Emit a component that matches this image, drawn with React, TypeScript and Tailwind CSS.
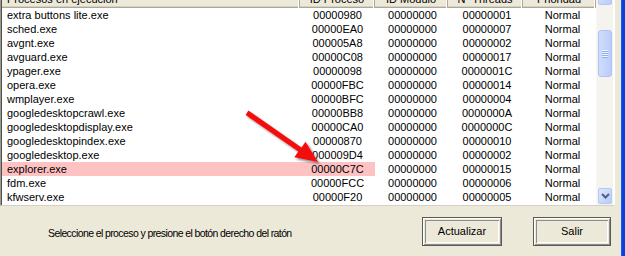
import React from "react";

const rows: [string, string, string, string][] = [
  ["extra buttons lite.exe", "00000980", "00000000", "00000001"],
  ["sched.exe", "00000EA0", "00000000", "00000007"],
  ["avgnt.exe", "000005A8", "00000000", "00000002"],
  ["avguard.exe", "00000C08", "00000000", "00000017"],
  ["ypager.exe", "00000098", "00000000", "0000001C"],
  ["opera.exe", "00000FBC", "00000000", "00000014"],
  ["wmplayer.exe", "00000BFC", "00000000", "00000004"],
  ["googledesktopcrawl.exe", "00000BB8", "00000000", "0000000A"],
  ["googledesktopdisplay.exe", "00000CA0", "00000000", "0000000C"],
  ["googledesktopindex.exe", "00000870", "00000000", "00000010"],
  ["googledesktop.exe", "000009D4", "00000000", "00000002"],
  ["explorer.exe", "00000C7C", "00000000", "00000015"],
  ["fdm.exe", "00000FCC", "00000000", "00000006"],
  ["kfwserv.exe", "00000F20", "00000000", "00000005"],
];

function HeaderCell({ w, label, left }: { w: string; label: string; left?: boolean }) {
  return (
    <div
      className={`${w} h-full flex items-center border-r border-r-[#ACA899] shadow-[inset_-1px_0_0_#ffffff,inset_0_-1px_0_#ACA899,inset_0_-2px_0_#D6D2C2] ${
        left ? "justify-start pl-[5px]" : "justify-center"
      }`}
    >
      <span className="mt-[1px]">{label}</span>
    </div>
  );
}

function Btn({ label, w }: { label: string; w: string }) {
  return (
    <div
      className={`${w} h-[29px] flex items-center justify-center border border-[#5A5A5A] bg-[#ECE9D8] shadow-[inset_1px_1px_0_#ffffff,inset_-1px_-1px_0_#8C8C8C,inset_2px_2px_0_#ECE9D8,inset_-2px_-2px_0_#ECE9D8,inset_3px_3px_0_#8C8C8C,inset_-3px_-3px_0_#ffffff]`}
    >
      {label}
    </div>
  );
}

export default function App() {
  return (
    <div
      className="w-[625px] h-[256px] flex bg-[#ECE9D8] overflow-hidden relative text-black text-[11px] leading-none"
      style={{ fontFamily: '"Liberation Sans", Arial, sans-serif' }}
    >
      <div className="w-[621px] flex flex-col">
        {/* List box */}
        <div className="w-[615px] h-[206px] flex border-l border-l-[#9C9A8E] border-b border-b-[#D4D0C8] border-r border-r-[#ffffff] bg-white">
          <div className="w-[1px] bg-[#505050]" />
          <div className="w-[594px] flex flex-col overflow-hidden">
            <div className="-mt-[10px] h-[18px] flex bg-[#ECE9D8] shrink-0">
              <HeaderCell w="w-[298px]" label="Procesos en ejecución" left />
              <HeaderCell w="w-[75px]" label="ID Proceso" />
              <HeaderCell w="w-[73px]" label="ID Módulo" />
              <HeaderCell w="w-[75px]" label="Nº Threads" />
              <HeaderCell w="w-[73px]" label="Prioridad" />
            </div>
            <div className="flex flex-col">
              {rows.map((r) => {
                const hl = r[0] === "explorer.exe";
                return (
                  <div key={r[0]} className="h-[14px] flex items-center">
                    <div className={`w-[298px] h-full flex items-center pl-[5px] ${hl ? "bg-[#FFC2C2]" : ""}`}>
                      {r[0]}
                    </div>
                    <div className={`w-[75px] h-full flex items-center justify-center ${hl ? "bg-[#FFC2C2]" : ""}`}>
                      {r[1]}
                    </div>
                    <div className="w-[73px] h-full flex items-center justify-center pl-[2px]">{r[2]}</div>
                    <div className="w-[75px] h-full flex items-center justify-center pl-[3px]">{r[3]}</div>
                    <div className="w-[73px] h-full flex items-center justify-center pl-[6px]">Normal</div>
                  </div>
                );
              })}
            </div>
          </div>
          {/* Scrollbar */}
          <div className="w-[17px] flex flex-col bg-[#F4F3EE] border-l border-l-[#F8F7F2]">
            <div className="-mt-[11px] h-[16px] mx-[1px] rounded-[2px] border border-[#B4C8F6] bg-gradient-to-br from-[#DCE6FE] to-[#B9CCF9] flex items-center justify-center shrink-0">
              <svg width="9" height="6" viewBox="0 0 9 6">
                <path d="M1 5 L4.5 1.5 L8 5" stroke="#4D6185" strokeWidth="2" fill="none" />
              </svg>
            </div>
            <div className="flex-1 flex flex-col">
              <div className="mt-[25px] h-[47px] mx-[1px] rounded-[3px] border border-[#AEC3F4] bg-gradient-to-r from-[#CFDCFD] to-[#BACDF9] flex flex-col items-center justify-center gap-[1px]">
                <div className="w-[6px] h-[1px] bg-[#EEF4FE] shadow-[0_1px_0_#8CB0F8]" />
                <div className="w-[6px] h-[1px] bg-[#EEF4FE] shadow-[0_1px_0_#8CB0F8]" />
                <div className="w-[6px] h-[1px] bg-[#EEF4FE] shadow-[0_1px_0_#8CB0F8]" />
                <div className="w-[6px] h-[1px] bg-[#EEF4FE] shadow-[0_1px_0_#8CB0F8]" />
              </div>
            </div>
            <div className="h-[16px] mx-[1px] mb-[1px] rounded-[2px] border border-[#B4C8F6] bg-gradient-to-br from-[#DCE6FE] to-[#B9CCF9] flex items-center justify-center shrink-0">
              <svg width="9" height="6" viewBox="0 0 9 6">
                <path d="M1 1 L4.5 4.5 L8 1" stroke="#4D6185" strokeWidth="2" fill="none" />
              </svg>
            </div>
          </div>
        </div>
        {/* Bottom area */}
        <div className="flex items-start pt-[11px]">
          <div className="w-[422px] h-[29px] flex items-center pl-[48px] pt-[3px] text-[10.5px] tracking-[-0.6px]">
            Seleccione el proceso y presione el botón derecho del ratón
          </div>
          <Btn label="Actualizar" w="w-[80px]" />
          <div className="w-[31px]" />
          <Btn label="Salir" w="w-[78px]" />
        </div>
      </div>
      <div className="w-[4px] bg-[#0A3FDD] border-l border-l-[#1B5AF0]" />

      {/* Red arrow annotation */}
      <svg className="absolute left-0 top-0 pointer-events-none" width="625" height="256" viewBox="0 0 625 256">
        <defs>
          <filter id="sh" x="-20%" y="-20%" width="140%" height="140%">
            <feDropShadow dx="2" dy="2" stdDeviation="1.2" floodColor="#000" floodOpacity="0.45" />
          </filter>
        </defs>
        <polygon
          points="248.4,110.6 301.5,147.6 305.5,141.8 318,162 294.3,157.2 298.3,151.4 245.6,115.1"
          fill="#F41010"
          filter="url(#sh)"
        />
      </svg>
    </div>
  );
}
